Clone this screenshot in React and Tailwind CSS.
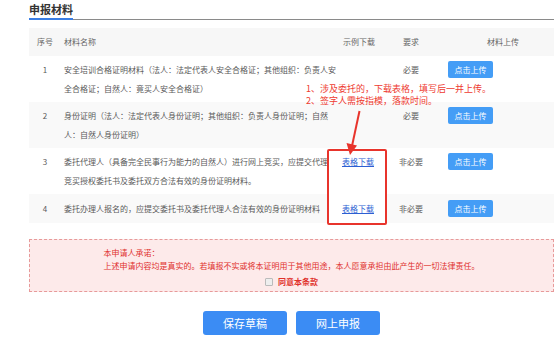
const rows = [
  {
    no: 1,
    name: "安全培训合格证明材料（法人：法定代表人安全合格证；其他组织：负责人安全合格证；自然人：竟买人安全合格证）",
    need: "必要",
    bg: "bg-white",
  },
  {
    no: 2,
    name: "身份证明（法人：法定代表人身份证明；其他组织：负责人身份证明；自然人：自然人身份证明）",
    need: "必要",
    bg: "bg-[#f9f9f9]",
  },
  {
    no: 3,
    name: "委托代理人（具备完全民事行为能力的自然人）进行网上竞买，应提交代理人竞买授权委托书及委托双方合法有效的身份证明材料。",
    need: "非必要",
    bg: "bg-white",
    link: true,
  },
  {
    no: 4,
    name: "委托办理人报名的，应提交委托书及委托代理人合法有效的身份证明材料",
    need: "非必要",
    bg: "bg-[#f9f9f9]",
    link: true,
    single: true,
  },
];

const cols = "grid grid-cols-[32px_280px_52px_36px_1fr]";

export default function App() {
  return (
    <div
      className="relative w-[554px] h-[347px] overflow-hidden bg-white pl-[29px]"
      style={{ fontFamily: '"Noto Sans CJK SC", "Microsoft YaHei", "Noto Sans", sans-serif' }}
    >
      {/* 标题 */}
      <div className="flex h-[20px] items-end border-b border-[#8a8a8a]">
        <span className="-mb-px border-b-2 border-[#3a7ee4] text-[11px] font-bold leading-[17px] text-[#333]">
          申报材料
        </span>
      </div>

      {/* 表格 */}
      <div className="mt-[8px] text-[8px] text-[#5a5a5a]">
        <div className={`${cols} h-[28px] items-center bg-[#f7f7f7] text-[#666]`}>
          <div className="text-center">序号</div>
          <div className="pl-[3px]">材料名称</div>
          <div className="pl-[2px]">示例下载</div>
          <div className="text-center">要求</div>
          <div className="pl-[58px]">材料上传</div>
        </div>
        {rows.map((r) => (
          <div
            key={r.no}
            className={`${cols} items-start ${r.bg} ${r.single ? "py-[5px]" : "py-[4px]"} leading-[19px]`}
          >
            <div className="text-center">{r.no}</div>
            <div className="pl-[3px] pr-[5px]">{r.name}</div>
            <div className="pl-[1px]">
              {r.link && (
                <a href="#" className="relative z-10 text-[#2d5fd3] underline">
                  表格下载
                </a>
              )}
            </div>
            <div className="text-center">{r.need}</div>
            <div className="pl-[19px] pt-[1px]">
              <button className="flex h-[17px] w-[45px] items-center justify-center rounded-[2px] bg-[#449df6] text-[8px] text-white">
                点击上传
              </button>
            </div>
          </div>
        ))}
      </div>

      {/* 承诺 */}
      <div className="mt-[16px] h-[53px] border border-dashed border-[#e79a9a] bg-[#fdeaea] pt-[6px] text-[8px] leading-[13px] text-[#e0302a]">
        <div className="mx-auto w-fit">
          <div>本申请人承诺：</div>
          <div>上述申请内容均是真实的。若填报不实或将本证明用于其他用途，本人愿意承担由此产生的一切法律责任。</div>
          <label className="mt-[3px] flex items-center justify-center gap-[5px]">
            <span className="h-[8px] w-[8px] rounded-[1px] border border-[#bbb] bg-[#eee]"></span>
            <span className="font-bold">同意本条款</span>
          </label>
        </div>
      </div>

      {/* 按钮 */}
      <div className="mt-[19px] flex justify-center gap-[9px]">
        <button className="h-[24px] w-[84px] rounded-[3px] bg-[#3b8cf4] text-[11px] text-white">保存草稿</button>
        <button className="h-[24px] w-[84px] rounded-[3px] bg-[#3b8cf4] text-[11px] text-white">网上申报</button>
      </div>

      {/* 标注 */}
      <div className="pointer-events-none absolute left-[306px] top-[83px] text-[9px] leading-[12px] text-[#ee3a30]">
        <div>1、涉及委托的，下载表格，填写后一并上传。</div>
        <div>2、签字人需按指模，落款时间。</div>
      </div>
      <div className="pointer-events-none absolute left-[327px] top-[149px] h-[76px] w-[60px] rounded-[2px] border-2 border-[#e8342c] bg-white"></div>
      <svg className="pointer-events-none absolute left-[330px] top-[100px]" width="40" height="60" viewBox="330 100 40 60">
        <line x1="359.5" y1="111" x2="352" y2="146" stroke="#e8342c" strokeWidth="2" />
        <polygon points="346.5,143 357,145.5 350,155" fill="#e8342c" />
      </svg>
    </div>
  );
}
